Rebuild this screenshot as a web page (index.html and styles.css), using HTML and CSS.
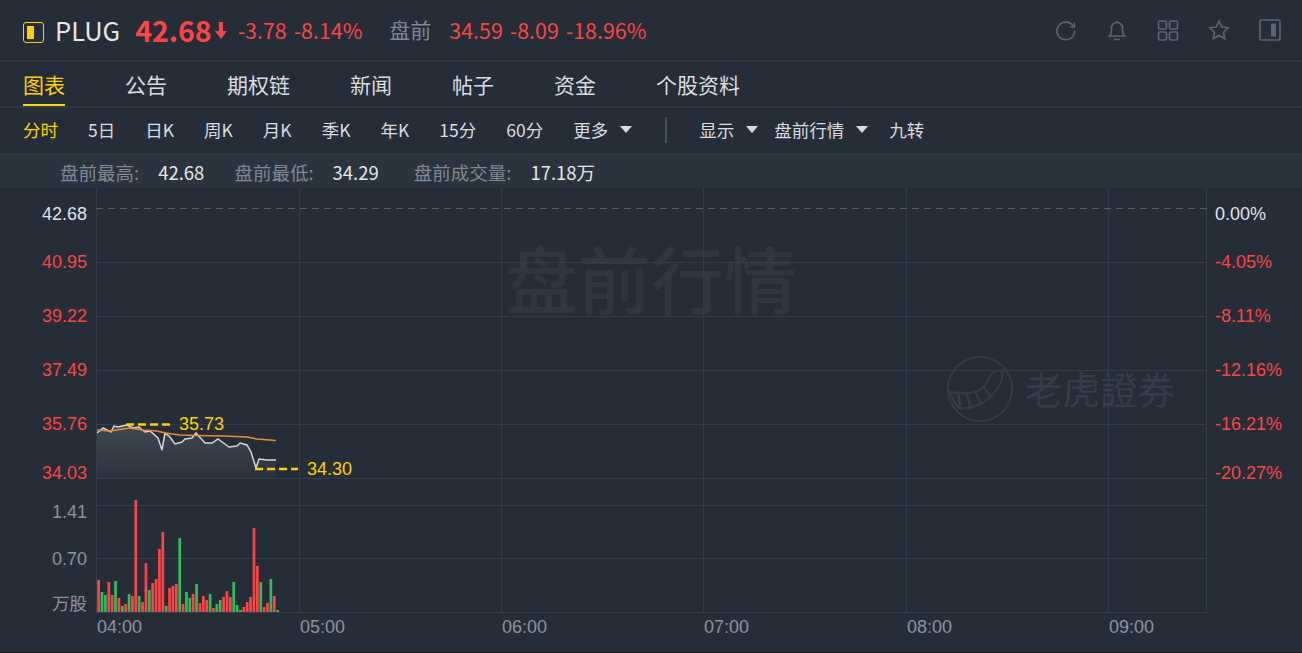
FILE: index.html
```html
<!DOCTYPE html>
<html lang="zh-CN">
<head>
  <meta charset="UTF-8" />
  <title>PLUG</title>
  <link rel="stylesheet" href="styles.css">
</head>
<body>
  <div class="app">
    <div class="quote">
      <span class="market-icon"><i></i></span>
      <span class="symbol">PLUG</span>
      <span class="price">42.68</span>
      <svg class="arrow" width="14" height="20" viewBox="0 0 14 20"><path d="M5 2h4v9h4l-6 8-6-8h4z" fill="#ff4444"/></svg>
      <span class="chg first">-3.78</span>
      <span class="chg">-8.14%</span>
      <span class="pre-label">盘前</span>
      <span class="chg">34.59</span>
      <span class="chg">-8.09</span>
      <span class="chg">-18.96%</span>
      <div class="tools">
        <svg width="22" height="22" viewBox="0 0 22 22"><path d="M18.2 7.2A8.8 8.8 0 1 0 19.6 12" /><path d="M19.4 3.4v4.6h-4.6" /></svg>
        <svg width="22" height="22" viewBox="0 0 22 22"><path d="M3.5 17h15c-1.6-1.4-2-3-2-5.5V9a5.5 5.5 0 0 0-11 0v2.500c0 2.500-.4 4.100-2 5.500zM8 20.500h6M11 3.500V1.800" /></svg>
        <svg width="22" height="22" viewBox="0 0 22 22"><rect x="1.500" y="2" width="8" height="8" rx="1.500"/><rect x="12.500" y="2" width="8" height="8" rx="1.500"/><rect x="1.500" y="13" width="8" height="8" rx="1.500"/><rect x="12.500" y="13" width="8" height="8" rx="1.500"/></svg>
        <svg width="22" height="22" viewBox="0 0 22 22"><path d="M11 2l2.800 6 6.400.8-4.700 4.400 1.200 6.500L11 16.500l-5.700 3.200 1.200-6.500L1.800 8.800 8.200 8z" /></svg>
        <svg width="22" height="22" viewBox="0 0 22 22"><rect x="1" y="1" width="20" height="20" rx="1.500"/><rect class="solid" x="12" y="4.500" width="5" height="13"/></svg>
      </div>
    </div>

    <div class="tabs">
      <span class="tab active">图表</span>
      <span class="tab">公告</span>
      <span class="tab">期权链</span>
      <span class="tab">新闻</span>
      <span class="tab">帖子</span>
      <span class="tab">资金</span>
      <span class="tab">个股资料</span>
    </div>

    <div class="toolbar">
      <span class="tool active">分时</span>
      <span class="tool">5日</span>
      <span class="tool">日K</span>
      <span class="tool">周K</span>
      <span class="tool">月K</span>
      <span class="tool">季K</span>
      <span class="tool">年K</span>
      <span class="tool">15分</span>
      <span class="tool">60分</span>
      <span class="tool drop">更多</span>
      <span class="sep"></span>
      <span class="tool drop">显示</span>
      <span class="tool drop tight">盘前行情</span>
      <span class="tool">九转</span>
    </div>

    <div class="stats">
      <span class="stat-label">盘前最高:</span><span class="stat-value">42.68</span>
      <span class="stat-label">盘前最低:</span><span class="stat-value wide">34.29</span>
      <span class="stat-label">盘前成交量:</span><span class="stat-value">17.18万</span>
    </div>

    <svg class="chart" width="1302" height="465" viewBox="0 188 1302 465">
      <defs>
        <linearGradient id="areaFill" x1="0" y1="0" x2="0" y2="1">
          <stop offset="0" stop-color="#3e4853"/>
          <stop offset="1" stop-color="#2a323d"/>
        </linearGradient>
      </defs>

      <text class="mark-big" x="505" y="308">盘前行情</text>
      <text class="mark-small" x="1025" y="404">老虎證券</text>
      <g class="mark-logo">
        <circle cx="980" cy="389" r="32"/>
        <path d="M950 392c8 1 14 2 20 1 8-1 13-4 16-9 2-4 3-8 6-11 3-2 8-3 10-2 1 5 0 10-3 15-6 10-14 17-23 20-6 2-13 3-17 2-4-4-7-10-9-16z"/>
        <path class="stripes" d="M958 393l3 17M967 394l4 15M975 391l6 13M983 386l7 10"/>
      </g>

      <g class="grid">
        <path d="M96.500 188V612M299.500 188V612M501.500 188V612M703.500 188V612M906.500 188V612M1108.500 188V612M1206.500 188V612"/>
        <path d="M96 262.500H1207M96 316.500H1207M96 370.500H1207M96 424.500H1207M96 478.500H1207M96 505.500H1207M96 558.500H1207M96 612.500H1207"/>
      </g>
      <path class="zero-line" d="M96 208.500H1207"/>

      <path fill="url(#areaFill)" d="M97 433L103 428 111 432 114 426 118 427 127 425 133 428 139 427 145 432 150 431 158 438 162 450 165 433 170 437 175 444 182 442 185 439 192 438 196 433 205 443 212 443 218 439 229 447 237 446 240 443 247 445 251 452 256 468 259 459 267 460 276 460V478H97Z"/>
      <path class="line-white" d="M97 433L103 428 111 432 114 426 118 427 127 425 133 428 139 427 145 432 150 431 158 438 162 450 165 433 170 437 175 444 182 442 185 439 192 438 196 433 205 443 212 443 218 439 229 447 237 446 240 443 247 445 251 452 256 468 259 459 267 460 276 460"/>
      <path class="line-orange" d="M97 430L110 431 130 428 143 430 157 431 165 433 180 435 197 435.500 223 436 247 437 257 439 276 440.500"/>

      <path class="dash-mark" d="M126 424.500H170M255 469H298"/>
      <text class="mark-label" x="179" y="430">35.73</text>
      <text class="mark-label" x="307" y="475">34.30</text>

      <g id="bars"></g>

      <g class="axis-left">
        <text class="flat" x="87" y="220">42.68</text>
        <text class="down" x="87" y="268">40.95</text>
        <text class="down" x="87" y="322">39.22</text>
        <text class="down" x="87" y="376">37.49</text>
        <text class="down" x="87" y="430">35.76</text>
        <text class="down" x="87" y="479">34.03</text>
        <text class="muted" x="87" y="518">1.41</text>
        <text class="muted" x="87" y="565">0.70</text>
        <text class="muted cjk" x="87" y="610">万股</text>
      </g>
      <g class="axis-right">
        <text class="flat" x="1215" y="220">0.00%</text>
        <text class="down" x="1215" y="268">-4.05%</text>
        <text class="down" x="1215" y="322">-8.11%</text>
        <text class="down" x="1215" y="376">-12.16%</text>
        <text class="down" x="1215" y="430">-16.21%</text>
        <text class="down" x="1215" y="479">-20.27%</text>
      </g>
      <g class="axis-time">
        <text x="97" y="633">04:00</text>
        <text x="300" y="633">05:00</text>
        <text x="502" y="633">06:00</text>
        <text x="704" y="633">07:00</text>
        <text x="907" y="633">08:00</text>
        <text x="1109" y="633">09:00</text>
      </g>
    </svg>
  </div>
  <script src="script.js"></script>
</body>
</html>
```

FILE: styles.css
```css
* {
  box-sizing: border-box;
}
body {
  margin: 0;
  background: #252d38;
  font-family: "Noto Sans CJK SC", "Noto Sans", sans-serif;
  color: #d8dde3;
  overflow: hidden;
}
.app {
  width: 1302px;
  height: 653px;
  border-bottom: 1px solid #14181e;
  overflow: hidden;
}

/* top quote row */
.quote {
  height: 62px;
  border-bottom: 2px solid #2e3946;
  padding: 0 21px 0 23px;
  display: flex;
  align-items: center;
}
.market-icon {
  width: 21px;
  height: 21px;
  border: 1.500px solid #ffd000;
  border-radius: 3px;
  padding: 3px;
  margin: 4px 11px 0 0;
  display: flex;
  justify-content: flex-start;
}
.market-icon i {
  width: 7px;
  background: #ffd000;
}
.symbol {
  font-size: 25.500px;
  color: #e4e7ea;
  margin: 0 15px 2px 0;
}
.price {
  font-size: 28.500px;
  font-weight: 700;
  color: #ff4444;
  margin-bottom: 2px;
}
.arrow {
  margin: 0 10px 0 2px;
}
.chg {
  font-size: 21.400px;
  color: #ff4444;
  margin: 0 7px 2px 0;
}
.pre-label {
  font-size: 21px;
  color: #7c8797;
  margin: 0 18px 2px 20px;
}
.tools {
  margin-left: auto;
  display: flex;
  gap: 29px;
}
.tools svg {
  fill: none;
  stroke: #5b6675;
  stroke-width: 1.600;
}
.tools .solid {
  fill: #5b6675;
  stroke: none;
}

/* tabs */
.tabs {
  height: 46px;
  border-bottom: 2px solid #2e3946;
  padding-left: 23px;
  display: flex;
  gap: 60px;
}
.tab {
  font-size: 21px;
  line-height: 44px;
  height: 44px;
  color: #d8dde3;
}
.tab.active {
  color: #ffd000;
  border-bottom: 2px solid #ffd000;
}

/* period toolbar */
.toolbar {
  height: 47px;
  border-bottom: 2px solid #2e3946;
  padding: 0 0 2px 23px;
  display: flex;
  align-items: center;
  gap: 30px;
}
.tool {
  font-size: 17.500px;
  color: #d8dde3;
}
.tool.active {
  color: #ffd000;
}
.tool.drop {
  display: flex;
  align-items: center;
}
.tool.drop::after {
  content: "";
  margin-left: 12px;
  border-left: 6px solid transparent;
  border-right: 6px solid transparent;
  border-top: 7px solid #d8dde3;
}
.tool.tight {
  margin-left: -14px;
  margin-right: -9px;
}
.sep {
  width: 2px;
  height: 26px;
  background: #45505d;
  margin: 0 2px 0 3px;
}

/* pre market stats */
.stats {
  height: 33px;
  background: #2a343f;
  padding-left: 60px;
  display: flex;
  align-items: center;
  font-size: 18.500px;
}
.stat-label {
  color: #7f8996;
  margin-right: 19px;
}
.stat-value {
  color: #e4e7ea;
  margin-right: 30px;
}
.stat-value.wide {
  margin-right: 35px;
}

/* chart */
.chart {
  display: block;
  font-family: "Liberation Sans", Arial, sans-serif;
}
.grid path {
  fill: none;
  stroke: #323e4d;
  stroke-width: 1;
}
.zero-line {
  fill: none;
  stroke: #5a616b;
  stroke-dasharray: 7 5;
}
.line-white {
  fill: none;
  stroke: #d4d6d9;
  stroke-width: 1.500;
}
.line-orange {
  fill: none;
  stroke: #f08a2c;
  stroke-width: 1.500;
}
.dash-mark {
  fill: none;
  stroke: #ffd000;
  stroke-width: 2.500;
  stroke-dasharray: 8 4;
}
.mark-label {
  font-size: 18px;
  fill: #ffd000;
}
.mark-big {
  font-family: "Noto Sans CJK SC", sans-serif;
  font-size: 73px;
  font-weight: 500;
  fill: #2e3742;
}
.mark-small {
  font-family: "Noto Sans CJK TC", sans-serif;
  font-size: 37.500px;
  fill: #343d49;
}
.mark-logo {
  fill: none;
  stroke: #343d49;
  stroke-width: 2;
}
.mark-logo .stripes {
  stroke-width: 2.500;
}
.axis-left text,
.axis-right text,
.axis-time text {
  font-size: 18px;
}
.axis-left text {
  text-anchor: end;
}
.axis-time text {
  fill: #8a94a0;
}
.flat {
  fill: #dfe3e8;
}
.down {
  fill: #ff4444;
}
.muted {
  fill: #8a94a0;
}
.axis-left .cjk {
  font-family: "Noto Sans CJK SC", sans-serif;
  font-size: 17.500px;
}
.bar-red {
  fill: #ff4444;
}
.bar-green {
  fill: #2ebd5b;
}
```

FILE: script.js
```js
// volume bars, [height px, r/g]
const vols = [
  [32, 'r'], [20, 'g'], [17, 'g'], [30, 'r'], [17, 'r'], [31, 'g'], [14, 'r'], [6, 'g'], [8, 'r'],
  [18, 'g'], [16, 'r'], [112, 'r'], [16, 'g'], [10, 'r'], [49, 'r'], [22, 'g'], [29, 'r'], [33, 'r'],
  [63, 'r'], [80, 'r'], [6, 'g'], [24, 'r'], [26, 'r'], [28, 'r'], [74, 'g'], [8, 'r'], [20, 'g'],
  [14, 'g'], [18, 'r'], [28, 'g'], [9, 'r'], [16, 'r'], [12, 'r'], [18, 'g'], [4, 'r'], [8, 'g'],
  [12, 'g'], [15, 'r'], [21, 'r'], [15, 'r'], [30, 'g'], [7, 'g'], [2, 'g'], [5, 'r'], [10, 'r'],
  [15, 'r'], [84, 'r'], [46, 'r'], [30, 'g'], [5, 'r'], [9, 'r'], [33, 'g'], [16, 'r'], [2, 'g'],
];

let html = '';
vols.forEach((v, i) => {
  const x = (97.3 + i * 3.377).toFixed(2);
  const cls = v[1] === 'r' ? 'bar-red' : 'bar-green';
  html += `<rect class="${cls}" x="${x}" y="${612 - v[0]}" width="2.7" height="${v[0]}"></rect>`;
});
document.getElementById('bars').innerHTML = html;
```
